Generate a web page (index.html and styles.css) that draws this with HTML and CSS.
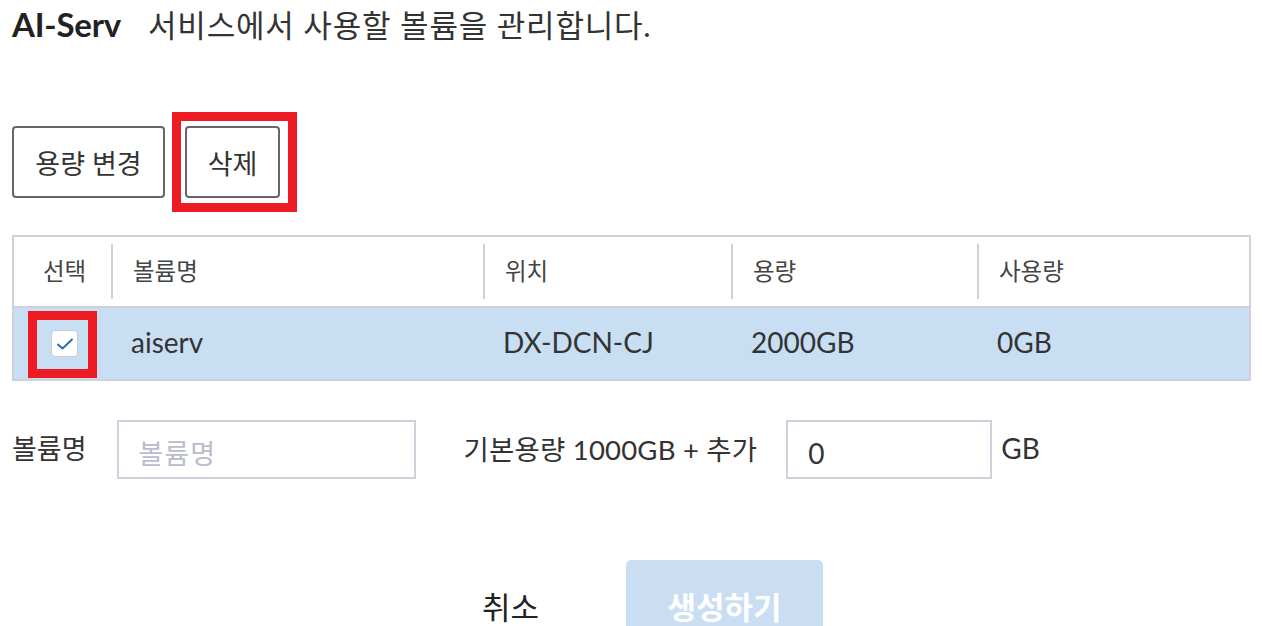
FILE: index.html
```html
<!DOCTYPE html>
<html lang="ko">
<head>
<meta charset="utf-8">
<link rel="stylesheet" href="styles.css">
</head>
<body>
<div class="page">
  <div class="title">
    <span class="title-name">AI-Serv</span>
    <span class="title-desc">서비스에서 사용할 볼륨을 관리합니다.</span>
  </div>

  <div class="toolbar">
    <button class="btn-outline btn-resize">용량 변경</button>
    <div class="mark-wrap">
      <button class="btn-outline btn-delete">삭제</button>
      <span class="mark mark-delete"></span>
    </div>
  </div>

  <div class="table">
    <div class="row head">
      <div class="cell c-select">선택</div>
      <div class="cell sep">볼륨명</div>
      <div class="cell sep">위치</div>
      <div class="cell sep">용량</div>
      <div class="cell sep">사용량</div>
    </div>
    <div class="row body selected">
      <div class="cell c-select">
        <span class="mark-wrap">
          <span class="checkbox">
            <svg width="18" height="14" viewBox="0 0 18 14"><path d="M2 7.5 L6.5 11.5 L16 2.5" fill="none" stroke="#2d67ad" stroke-width="1.9" stroke-linecap="round" stroke-linejoin="round"/></svg>
          </span>
          <span class="mark mark-check"></span>
        </span>
      </div>
      <div class="cell">aiserv</div>
      <div class="cell">DX-DCN-CJ</div>
      <div class="cell">2000GB</div>
      <div class="cell">0GB</div>
    </div>
  </div>

  <div class="form">
    <label class="form-label">볼륨명</label>
    <input class="input input-name" type="text" placeholder="볼륨명">
    <label class="form-label label-size">기본용량 1000GB + 추가</label>
    <input class="input input-size" type="text" value="0">
    <span class="form-unit">GB</span>
  </div>

  <div class="footer">
    <button class="btn-cancel">취소</button>
    <button class="btn-create">생성하기</button>
  </div>
</div>
</body>
</html>
```
FILE: styles.css
```css
* { box-sizing: border-box; }
html, body { margin: 0; padding: 0; background: #fff; overflow: hidden; }
body {
  font-family: "Lato", "Noto Sans CJK KR", sans-serif;
  color: #333;
  width: 1262px;
  height: 626px;
}
.page { padding: 0 11px 0 12px; }

.title {
  display: flex;
  align-items: baseline;
  height: 48px;
  line-height: 48px;
}
.title-name {
  font-weight: 700;
  font-size: 33px;
  color: #222;
  letter-spacing: -0.2px;
}
.title-desc {
  margin-left: 27px;
  font-size: 31px;
  color: #333;
  letter-spacing: 0.8px;
}

.toolbar {
  display: flex;
  align-items: center;
  margin-top: 78px;
  gap: 20px;
}
.btn-outline {
  font-family: inherit;
  font-size: 27px;
  color: #333;
  background: #fff;
  border: 2px solid #666;
  border-radius: 4px;
  height: 72px;
  padding: 0;
  cursor: pointer;
}
.btn-resize { width: 153px; }
.btn-delete { width: 95px; }
.mark-wrap { position: relative; display: inline-flex; }
.mark {
  position: absolute;
  border: 9px solid #ec1b24;
  pointer-events: none;
}
.mark-delete { left: -13px; right: -17px; top: -14px; bottom: -14px; }
.mark-check { left: -23px; right: -19px; top: -19px; bottom: -21px; }

.table {
  margin-top: 37px;
  width: 1239px;
  border: 2px solid #cfd0db;
}
.row {
  display: grid;
  grid-template-columns: 97px 372px 248px 246px 1fr;
}
.head {
  padding: 7px 0;
  border-bottom: 2px solid #cfd0db;
  height: 71px;
}
.head .cell {
  height: 55px;
  color: #444;
  font-size: 23.5px;
  padding-bottom: 3px;
}
.cell {
  display: flex;
  align-items: center;
  padding-left: 20px;
  font-size: 28px;
  color: #333;
}
.body .cell { padding-bottom: 4px; }
.sep { border-left: 2px solid #cfd0db; }
.c-select { justify-content: center; padding-left: 4px; }
.body .c-select { padding-bottom: 0; }
.body { height: 71px; }
.selected { background: #c8dff3; }
.checkbox {
  width: 27px;
  height: 27px;
  background: #fff;
  border: 1px solid #c9ccd6;
  border-radius: 4px;
  display: flex;
  align-items: center;
  justify-content: center;
}

.form {
  display: flex;
  align-items: center;
  margin-top: 39px;
}
.form-label {
  font-size: 27px;
  color: #333;
  padding-bottom: 4px;
}
.input {
  height: 59px;
  border: 2px solid #cfd0db;
  font-family: inherit;
  font-size: 28px;
  color: #333;
  padding: 6px 20px 0;
  outline: none;
  background: #fff;
}
.input::placeholder { color: #b9bccd; font-size: 27px; letter-spacing: 1px; }
.input-name { width: 299px; margin-left: 30px; }
.label-size { margin-left: 48px; font-size: 27.5px; letter-spacing: 0.2px; }
.input-size { width: 206px; margin-left: 29px; }
.form-unit { margin-left: 9px; font-size: 28px; color: #333; padding-bottom: 4px; }

.footer {
  display: flex;
  margin-top: 81px;
  padding-left: 400px;
  gap: 17px;
}
.btn-cancel {
  width: 197px;
  height: 90px;
  border: none;
  background: transparent;
  font-family: inherit;
  font-size: 31px;
  color: #222;
  padding: 0;
}
.btn-create {
  width: 197px;
  height: 90px;
  border: none;
  border-radius: 5px;
  background: #c9def3;
  color: #fff;
  font-family: inherit;
  font-size: 31px;
  font-weight: 700;
  padding: 0;
}
```
